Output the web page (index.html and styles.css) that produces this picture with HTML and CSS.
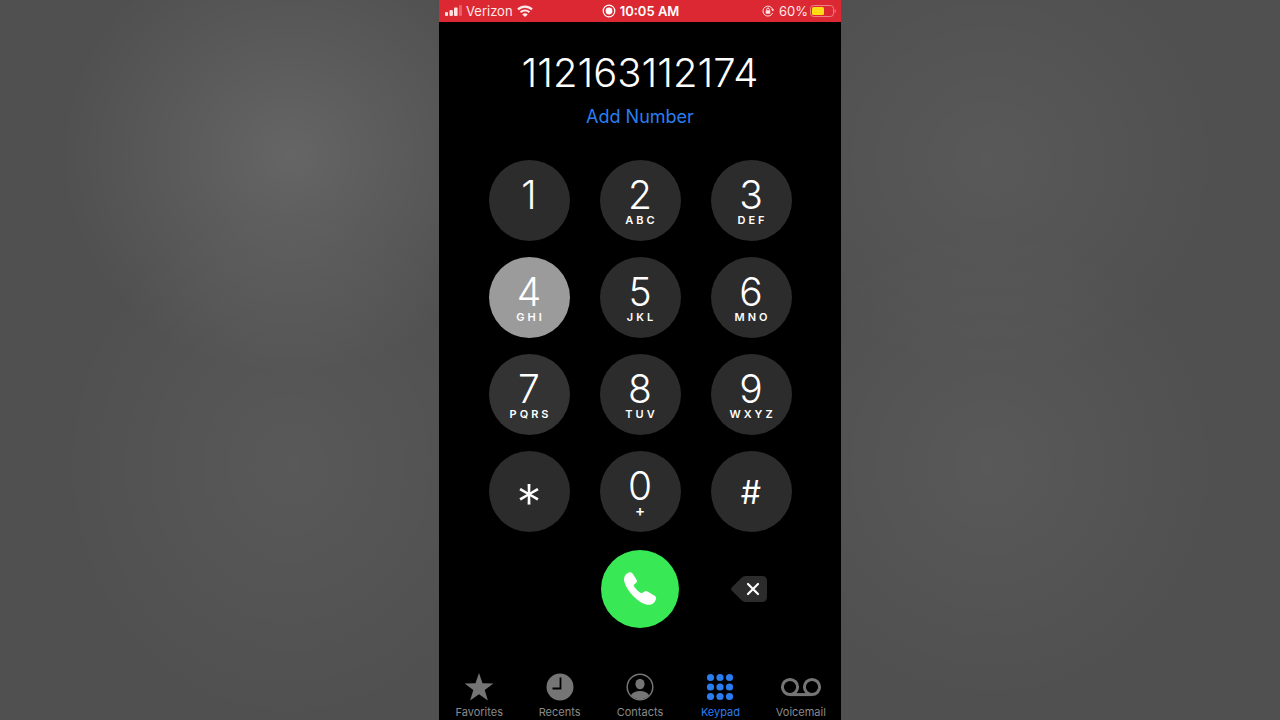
FILE: index.html
```html
<!DOCTYPE html>
<html lang="en">
<head>
  <meta charset="UTF-8">
  <meta name="viewport" content="width=device-width, initial-scale=1.0">
  <title>Phone Keypad</title>
  <link rel="stylesheet" href="styles.css">
</head>
<body>
  <div class="phone">
    <header class="status">
      <div class="status-left">
        <svg width="17" height="12" viewBox="0 0 17 12" fill="#ffe3e3">
          <rect x="0" y="7" width="3" height="4" rx="1"/>
          <rect x="4.500" y="5" width="3.400" height="6" rx="1"/>
          <rect x="9" y="2.500" width="3.600" height="8.500" rx="1"/>
          <rect x="14" y="0" width="3" height="11" rx="1" opacity=".3"/>
        </svg>
        <span>Verizon</span>
        <svg width="16" height="12" viewBox="0 0 16 12" fill="none" stroke="#ffe9e9" stroke-width="2.200">
          <path d="M1 4.400a10 10 0 0 1 14 0"/>
          <path d="M3.600 7.300a6.300 6.300 0 0 1 8.800 0"/>
          <path d="M8 12 5.200 9.400a3.900 3.900 0 0 1 5.600 0z" fill="#ffe9e9" stroke="none"/>
        </svg>
      </div>
      <div class="status-time">
        <svg width="14" height="14" viewBox="0 0 14 14">
          <circle cx="7" cy="7" r="5.800" fill="none" stroke="#fff" stroke-width="1.200"/>
          <circle cx="7" cy="7" r="3.400" fill="#fff"/>
        </svg>
        <span>10:05 AM</span>
      </div>
      <div class="status-right">
        <svg width="12" height="12" viewBox="0 0 12 12" fill="none" stroke="#ffe3e3">
          <path d="M10.800 4.800A5 5 0 1 0 10.600 8"/>
          <path d="M9 4.200h3L11 6.400z" fill="#ffe3e3" stroke="none"/>
          <rect x="3.700" y="5.300" width="4.600" height="3.400" rx=".6" fill="#ffe3e3" stroke="none"/>
          <path d="M4.700 5.500V4.300a1.300 1.300 0 0 1 2.600 0v1.200"/>
        </svg>
        <span class="percent">60%</span>
        <svg width="26" height="12" viewBox="0 0 26 12">
          <rect x=".5" y=".5" width="23" height="11" rx="3" fill="none" stroke="#ee8087"/>
          <rect x="2" y="2" width="12" height="8" rx="1.500" fill="#ffdc14"/>
          <path d="M24.700 4v4q1.200-.6 1.200-2t-1.200-2z" fill="#ee8087"/>
        </svg>
      </div>
    </header>

    <main class="dialer">
      <output class="number" id="number">112163112174</output>
      <button class="add">Add Number</button>

      <div class="keypad">
        <button class="key" data-key="1"><span class="digit">1</span></button>
        <button class="key" data-key="2"><span class="digit">2</span><span class="letters">ABC</span></button>
        <button class="key" data-key="3"><span class="digit">3</span><span class="letters">DEF</span></button>
        <button class="key pressed" data-key="4"><span class="digit">4</span><span class="letters">GHI</span></button>
        <button class="key" data-key="5"><span class="digit">5</span><span class="letters">JKL</span></button>
        <button class="key" data-key="6"><span class="digit">6</span><span class="letters">MNO</span></button>
        <button class="key fading" data-key="7"><span class="digit">7</span><span class="letters">PQRS</span></button>
        <button class="key" data-key="8"><span class="digit">8</span><span class="letters">TUV</span></button>
        <button class="key" data-key="9"><span class="digit">9</span><span class="letters">WXYZ</span></button>
        <button class="key" data-key="*"><span class="star">*</span></button>
        <button class="key" data-key="0"><span class="digit">0</span><span class="letters plus">+</span></button>
        <button class="key" data-key="#"><span class="hash">#</span></button>

        <button class="call" aria-label="Call">
          <svg width="34" height="34" viewBox="0 0 34 34" fill="#fff">
            <path d="M6 .4C7.800-.2 9 .6 9.900 2l3.500 5.400c.9 1.500.7 2.700-.4 3.700l-1.700 1.400c-.7.600-.7 1.100-.2 1.900 1.700 2.600 3.800 4.700 6.400 6.400.8.500 1.400.4 2-.1l1.700-1c1.200-.8 2.500-.8 3.800.1l6.600 4c1.500 1 1.900 2.200 1.300 3.700-1.200 3.300-3.800 5.300-7.100 5.300-4 0-9-2.300-13.700-7C6 20 1.200 12.600 1 7.400.9 4.200 3 1.300 6 .4z"/>
          </svg>
        </button>
        <button class="delete" aria-label="Delete">
          <svg width="36" height="26" viewBox="0 0 36 26">
            <path d="M1 11.200 10.500 1.700Q12.200 0 14.600 0H31q5 0 5 5v16q0 5-5 5H14.600q-2.400 0-4.100-1.700L1 14.800q-1.800-1.800 0-3.600z" fill="#2c2c2d"/>
            <path d="M17 8l10 10M27 8 17 18" stroke="#fff" stroke-width="2.200" stroke-linecap="round"/>
          </svg>
        </button>
      </div>
    </main>

    <nav class="tabs">
      <a class="tab" href="#favorites">
        <svg width="30" height="28" viewBox="0 0 30 28" fill="currentColor">
          <path d="M15 0l3.500 10.200 10.900.2-8.700 6.500 3.200 10.600L15 21.200l-8.900 6.300 3.200-10.600L.6 10.400l10.900-.2z"/>
        </svg>
        <span>Favorites</span>
      </a>
      <a class="tab" href="#recents">
        <svg width="28" height="28" viewBox="0 0 28 28">
          <circle cx="14" cy="14" r="13.500" fill="currentColor"/>
          <path d="M14.500 4.500v11H6.500" fill="none" stroke="#000" stroke-width="1.800"/>
        </svg>
        <span>Recents</span>
      </a>
      <a class="tab" href="#contacts">
        <svg width="28" height="28" viewBox="0 0 28 28">
          <circle cx="14" cy="14" r="12.800" fill="none" stroke="currentColor" stroke-width="1.500"/>
          <ellipse cx="14" cy="11" rx="4.600" ry="5.300" fill="currentColor"/>
          <path d="M4.800 22.200c2-3 5.400-4.200 9.200-4.200s7.200 1.200 9.200 4.200A12.300 12.300 0 0 1 14 26.300a12.300 12.300 0 0 1-9.200-4.100z" fill="currentColor"/>
        </svg>
        <span>Contacts</span>
      </a>
      <a class="tab active" href="#keypad">
        <svg width="28" height="28" viewBox="0 0 28 28" fill="currentColor">
          <circle cx="4.500" cy="4.500" r="3.600"/><circle cx="14" cy="4.500" r="3.600"/><circle cx="23.500" cy="4.500" r="3.600"/>
          <circle cx="4.500" cy="14" r="3.600"/><circle cx="14" cy="14" r="3.600"/><circle cx="23.500" cy="14" r="3.600"/>
          <circle cx="4.500" cy="23.500" r="3.600"/><circle cx="14" cy="23.500" r="3.600"/><circle cx="23.500" cy="23.500" r="3.600"/>
        </svg>
        <span>Keypad</span>
      </a>
      <a class="tab" href="#voicemail">
        <svg width="42" height="28" viewBox="0 0 42 28" fill="none" stroke="currentColor" stroke-width="3">
          <circle cx="10" cy="14" r="7.600"/>
          <circle cx="32" cy="14" r="7.600"/>
          <path d="M10 21.600h22"/>
        </svg>
        <span>Voicemail</span>
      </a>
    </nav>
  </div>

  <script>
    const number = document.getElementById('number');

    document.querySelectorAll('.key').forEach(key => {
      key.addEventListener('click', () => {
        number.textContent += key.dataset.key;
      });
    });

    document.querySelector('.delete').addEventListener('click', () => {
      number.textContent = number.textContent.slice(0, -1);
    });
  </script>
</body>
</html>
```
FILE: styles.css
```css
* {
  box-sizing: border-box;
}
body {
  margin: 0;
  min-height: 100vh;
  font-family: Inter, "Liberation Sans", sans-serif;
  color: white;
  background:
    radial-gradient(ellipse 230px 220px at 290px 155px, rgba(255,255,255,0.12), rgba(255,255,255,0.06) 50%, transparent),
    radial-gradient(ellipse 230px 260px at 290px 465px, rgba(255,255,255,0.05), transparent),
    radial-gradient(ellipse 230px 220px at 990px 160px, rgba(255,255,255,0.05), transparent),
    radial-gradient(ellipse 230px 240px at 990px 465px, rgba(255,255,255,0.05), transparent),
    #505050;
}
button {
  padding: 0;
  border: none;
  background: none;
  color: inherit;
  font-family: inherit;
  cursor: pointer;
}
svg {
  display: block;
}
.phone {
  display: flex;
  flex-direction: column;
  max-width: 402px;
  min-height: 100vh;
  margin: auto;
  background: black;
}

/* status bar */
.status {
  display: grid;
  grid-template-columns: 1fr auto 1fr;
  align-items: center;
  height: 22px;
  padding: 0 5px 0 6px;
  background: #db2832;
  color: #ffe9e9;
  font-size: 13px;
}
.status-left, .status-time, .status-right {
  display: flex;
  align-items: center;
  gap: 4px;
}
.status-time {
  color: white;
  font-size: 13px;
  font-weight: 600;
}
.status-right {
  justify-content: flex-end;
  gap: 2px;
}
.percent {
  padding-left: 3px;
}

/* dialer */
.dialer {
  display: flex;
  flex-direction: column;
  align-items: center;
  flex: 1;
  padding-top: 27px;
}
.number {
  font-size: 40px;
  font-weight: 350;
  line-height: 48px;
}
.add {
  margin-top: 8px;
  color: #2a7df0;
  font-size: 18px;
  line-height: 24px;
}
.keypad {
  display: grid;
  grid-template-columns: repeat(3, 81px);
  grid-auto-rows: 81px;
  gap: 16px 30px;
  margin-top: 31px;
}
.key {
  display: flex;
  flex-direction: column;
  align-items: center;
  padding-top: 16px;
  border-radius: 50%;
  background: #2c2c2d;
}
.key.pressed {
  background: #9b9b9b;
}
.key.fading {
  background: #333334;
}
.digit {
  font-size: 39px;
  font-weight: 350;
  line-height: 38px;
}
.letters {
  padding-left: 3px;
  font-size: 11px;
  font-weight: 600;
  line-height: 12px;
  letter-spacing: 3px;
}
.plus {
  font-size: 15px;
}
.star {
  font-size: 50px;
  font-weight: 350;
  line-height: 72px;
}
.hash {
  font-size: 32px;
  line-height: 52px;
}
.call {
  display: flex;
  align-items: center;
  justify-content: center;
  grid-column: 2;
  place-self: center;
  width: 78px;
  height: 78px;
  border-radius: 50%;
  background: #38e854;
}
.delete {
  place-self: center;
  margin-right: 4px;
}

/* tab bar */
.tabs {
  display: flex;
  padding-bottom: 1px;
}
.tab {
  display: flex;
  flex: 1;
  flex-direction: column;
  align-items: center;
  gap: 4px;
  color: #757575;
  font-size: 11px;
  line-height: 14px;
  text-decoration: none;
}
.tab span {
  color: #8a8a8a;
}
.tab.active, .tab.active span {
  color: #2a7df0;
}
```
